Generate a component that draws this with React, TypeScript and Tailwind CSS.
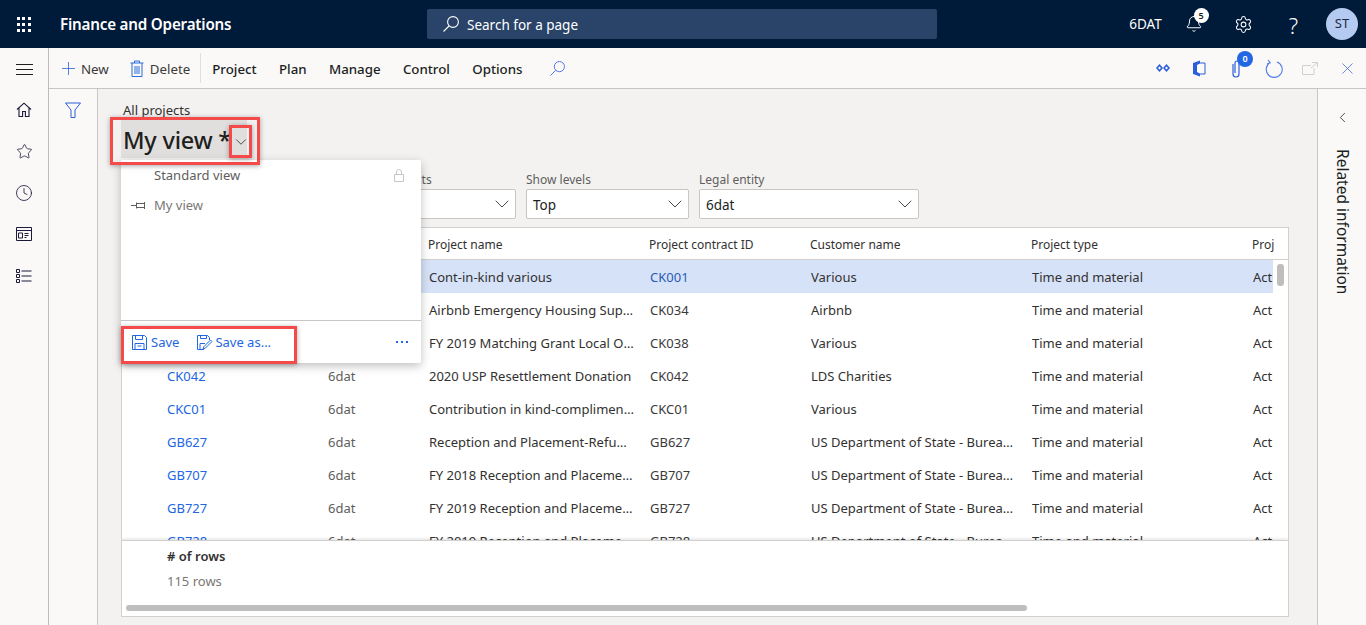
import React from "react";
import { Bell, ChevronDown, ChevronLeft, Clock, Plus, Settings, Star, X } from "lucide-react";

const rows = [
  ["CK001", "6dat", "Cont-in-kind various", "CK001", "Various"],
  ["CK034", "6dat", "Airbnb Emergency Housing Support", "CK034", "Airbnb"],
  ["CK038", "6dat", "FY 2019 Matching Grant Local Office", "CK038", "Various"],
  ["CK042", "6dat", "2020 USP Resettlement Donation", "CK042", "LDS Charities"],
  ["CKC01", "6dat", "Contribution in kind-complimentary", "CKC01", "Various"],
  ["GB627", "6dat", "Reception and Placement-Refugee Program", "GB627", "US Department of State - Bureau of"],
  ["GB707", "6dat", "FY 2018 Reception and Placement Program", "GB707", "US Department of State - Bureau of"],
  ["GB727", "6dat", "FY 2019 Reception and Placement Program", "GB727", "US Department of State - Bureau of"],
  ["GB728", "6dat", "FY 2019 Reception and Placement Program", "GB728", "US Department of State - Bureau of"],
];

const cols = "grid grid-cols-[45px_161px_101px_221px_161px_221px_221px_1fr]";

function Cell({ children, className = "" }: { children?: React.ReactNode; className?: string }) {
  return <div className={`truncate pr-4 pt-[2px] ${className}`}>{children}</div>;
}

function Filter({ label, value, width }: { label: string; value: string; width: string }) {
  return (
    <div className={width}>
      <div className="h-[20px] pt-px text-[12px] leading-[20px] text-[#605e5c]">{label}</div>
      <div className="flex h-[30px] items-center justify-between rounded-[2px] border border-[#c8c6c4] bg-white pl-[6px] pr-px text-[13.5px] text-[#201f1e]">
        <span className="pt-[3px]">{value}</span>
        <ChevronDown size={24} strokeWidth={0.9} className="text-[#323130]" />
      </div>
    </div>
  );
}

function RailIcon({ children }: { children: React.ReactNode }) {
  return <div className="flex h-[41.5px] w-full items-center justify-center text-[#1b1a3a]">{children}</div>;
}

export default function App() {
  return (
    <div className="relative flex h-screen flex-col overflow-hidden bg-[#f3f2f1] text-[13px] text-[#323130] [font-family:'Noto_Sans','Open_Sans',sans-serif]">
      {/* top bar */}
      <header className="flex h-[48px] shrink-0 items-center bg-[#001a3a] text-white">
        <div className="grid w-[48px] grid-cols-3 justify-items-center gap-y-[3px] px-[16px]">
          {Array.from({ length: 9 }).map((_, i) => (
            <span key={i} className="h-[3px] w-[3px] bg-white" />
          ))}
        </div>
        <div className="ml-[12px] w-[367px] text-[15.2px] font-semibold tracking-[-0.2px]">Finance and Operations</div>
        <div className="flex h-[30px] w-[510px] items-center rounded-[2px] bg-[#2a4368] pl-[15px] text-[13.5px]">
          <svg width="18" height="18" viewBox="0 0 18 18" fill="none" stroke="white" strokeWidth="1.1">
            <circle cx="11" cy="7" r="5.4" />
            <path d="M7 11L1.5 16.5" />
          </svg>
          <span className="ml-[7px] pt-[3px]">Search for a page</span>
        </div>
        <div className="ml-auto flex items-center">
          <span className="mr-[23px] text-[13.5px]">6DAT</span>
          <div className="relative mr-[31px]">
            <Bell size={18} strokeWidth={1.3} />
            <span className="absolute -right-[6px] -top-[7px] flex h-[15px] w-[15px] items-center justify-center rounded-full bg-white text-[9px] font-semibold text-[#201f1e]">5</span>
          </div>
          <Settings size={19} strokeWidth={1.3} className="mr-[36px]" />
          <span className="mr-[28px] pt-px text-[22px] font-light leading-none">?</span>
          <div className="mr-[8px] flex h-[32px] w-[32px] items-center justify-center rounded-full bg-[#b4caf0] text-[13px] text-[#1c2a44]">ST</div>
        </div>
      </header>

      {/* action bar */}
      <div className="flex h-[41px] shrink-0 items-center">
        <div className="flex h-full w-[49px] shrink-0 flex-col items-center justify-center gap-[4px] border-r border-[#bdbbb9] bg-[#faf9f8] pt-[2px]">
          <span className="h-px w-[17px] bg-[#201f1e]" />
          <span className="h-px w-[17px] bg-[#201f1e]" />
          <span className="h-px w-[17px] bg-[#201f1e]" />
        </div>
        <div className="flex h-full min-w-0 flex-1 items-center border-b border-[#c8c6c4] bg-[#faf9f8] text-[13.3px] text-[#3b3a39]">
          <Plus size={21} strokeWidth={0.9} className="ml-[9px] text-[#2b5fd9]" />
          <span className="ml-[2px] pt-[3px]">New</span>
          <svg width="14" height="17" viewBox="0 0 14 17" fill="none" stroke="#2b6cd9" strokeWidth="1" className="ml-[21px]">
            <path d="M.5 3h13M4.5 3V1h5v2M2 3v13.5h10V3M5 6v8M7 6v8M9 6v8" />
          </svg>
          <span className="ml-[6px] pt-[3px]">Delete</span>
          <span className="ml-[10px] h-[30px] w-px bg-[#e1dfdd]" />
          <div className="ml-[11px] flex gap-[22.3px] pt-[3px] font-medium text-[#201f1e]">
            <span>Project</span>
            <span>Plan</span>
            <span>Manage</span>
            <span>Control</span>
            <span>Options</span>
          </div>
          <svg width="17" height="17" viewBox="0 0 18 18" fill="none" stroke="#4f6bed" strokeWidth="1" className="ml-[26px]">
            <circle cx="11" cy="7" r="5.4" />
            <path d="M7 11L1.5 16.5" />
          </svg>
          <div className="ml-auto flex items-center">
            <svg width="14" height="10" viewBox="0 0 14 10" fill="#2b5fd9" className="mr-[22px]">
              <path d="M3.5 1L7 5L3.5 9L0 5zM10.5 1L14 5L10.5 9L7 5z" />
              <path d="M3.5 3.5L5 5L3.5 6.5L2 5zM10.5 3.5L12 5L10.5 6.5L9 5z" fill="white" />
            </svg>
            <svg width="14" height="17" viewBox="0 0 14 17" className="mr-[25px]">
              <path d="M8 0.5L1 3v11l7 2.5z" fill="#2b5fd9" />
              <path d="M8 3h5v11H8" fill="none" stroke="#2b5fd9" />
              <path d="M8 3.5L5 5v7l3 1.5z" fill="white" />
            </svg>
            <div className="relative mr-[24px] mt-[2px]">
              <svg width="10" height="18" viewBox="0 0 10 18" fill="none" stroke="#2b5fd9" strokeWidth="1.2">
                <path d="M2 4v10a3 3 0 0 0 6 0V3a2 2 0 0 0-4 0v10" />
              </svg>
              <span className="absolute -right-[12px] -top-[9px] flex h-[16px] w-[16px] items-center justify-center rounded-full bg-[#2266e3] text-[9px] font-semibold text-white">0</span>
            </div>
            <svg width="18" height="19" viewBox="0 0 18 19" fill="none" stroke="#4f7be8" strokeWidth="1.1" className="mr-[19px]">
              <path d="M5 3.6a8 8 0 1 0 7-.7M3 1l2.2 2.8L2 5" />
            </svg>
            <svg width="16" height="13" viewBox="0 0 16 13" fill="none" stroke="#d2d0ce" strokeWidth="1" className="mr-[20px]">
              <path d="M12 6v6.5H.5v-9H9M10 .5h5.5V5M15.5.5L9 6" />
            </svg>
            <X size={19} strokeWidth={0.9} className="mr-[9px] text-[#2b5fd9]" />
          </div>
        </div>
      </div>

      <div className="flex min-h-0 flex-1">
        {/* nav rail */}
        <nav className="flex w-[49px] shrink-0 flex-col border-r border-[#bdbbb9] bg-[#faf9f8]">
          <RailIcon>
            <svg width="16" height="16" viewBox="0 0 16 16" fill="none" stroke="currentColor" strokeWidth="1.1">
              <path d="M1 7.5L8 1.2L15 7.5M3 6v8.5h3.6V9.5h2.8v5H13V6" />
            </svg>
          </RailIcon>
          <RailIcon><Star size={17} strokeWidth={1.1} /></RailIcon>
          <RailIcon><Clock size={18} strokeWidth={1.1} /></RailIcon>
          <RailIcon>
            <svg width="16" height="14" viewBox="0 0 16 14" fill="none" stroke="currentColor" strokeWidth="1">
              <path d="M.5.5h15v13H.5zM.5 3.5h15M2.5 6h4v5h-4zM8.5 6.5h4M8.5 8.5h4M8.5 10.5h2" />
            </svg>
          </RailIcon>
          <RailIcon>
            <svg width="16" height="14" viewBox="0 0 16 14" fill="none" stroke="currentColor" strokeWidth="1">
              <path d="M.5.5h3v3h-3zM.5 5.5h3v3h-3zM.5 10.5h3v3h-3zM5.5 2h10M5.5 7h10M5.5 12h10" />
            </svg>
          </RailIcon>
        </nav>

        {/* filter rail */}
        <div className="flex w-[49px] shrink-0 justify-center border-r border-[#c8c6c4] bg-[#faf9f8] pt-[13px]">
          <svg width="16" height="16" viewBox="0 0 16 16" fill="none" stroke="#2b5fd9" strokeWidth="1">
            <path d="M.5 1h15L10 8v7.5H6V8z" />
          </svg>
        </div>

        {/* content */}
        <main className="flex min-w-0 flex-1 flex-col pb-[8px] pl-[23px] pr-[28px]">
          <div className="ml-[2px] mt-[12px] h-[19px] text-[13px] leading-[18px] text-[#323130]">All projects</div>
          <div className="flex h-[38px] w-[126px] items-center whitespace-nowrap bg-[#e1dfdd] pl-[2px] text-[23.5px] font-medium text-[#201f1e]">
            <span className="pt-[3px] -tracking-[0.2px]">My view *</span>
            <ChevronDown size={18} strokeWidth={1} className="ml-[1px] mt-[5px] shrink-0" />
          </div>
          <div className="ml-[232px] mt-[11px] flex gap-[10px]">
            <Filter label="Show projects" value="All" width="w-[163px]" />
            <Filter label="Show levels" value="Top" width="w-[163px]" />
            <Filter label="Legal entity" value="6dat" width="w-[220px]" />
          </div>

          {/* grid */}
          <section className="relative mt-[8px] flex min-h-0 flex-1 flex-col overflow-hidden border border-[#d2d0ce] bg-white">
            <div className={`${cols} h-[32px] shrink-0 items-center whitespace-nowrap border-b border-[#d2d0ce] text-[12px] text-[#323130]`}>
              <span />
              <Cell>Project ID</Cell>
              <Cell>Company</Cell>
              <Cell className="-ml-px">Project name</Cell>
              <Cell className="-ml-px">Project contract ID</Cell>
              <Cell className="-ml-px">Customer name</Cell>
              <Cell className="-ml-px">Project type</Cell>
              <div className="-ml-px overflow-hidden pt-[2px]">Proj</div>
            </div>
            <div className="h-[280px] shrink-0 overflow-hidden pr-[15px]">
              {rows.map((r, i) => (
                <div key={r[0]} className={`${cols} h-[33px] items-center ${i === 0 ? "bg-[#d6e2f8]" : ""}`}>
                  <span />
                  <Cell className="text-[#2266e3]">{r[0]}</Cell>
                  <Cell className="text-[#605e5c]">{r[1]}</Cell>
                  <Cell>{r[2]}</Cell>
                  <Cell className={i === 0 ? "text-[#2b5bb5]" : "text-[#3b3a39]"}>{r[3]}</Cell>
                  <Cell className="pr-2">{r[4]}</Cell>
                  <Cell>Time and material</Cell>
                  <div className="overflow-hidden whitespace-nowrap pt-[2px]">Active</div>
                </div>
              ))}
            </div>
            <span className="absolute right-[4px] top-[36px] h-[22px] w-[7px] rounded-[3px] bg-[#bebebe]" />
            <div className="relative z-10 flex-1 border-t border-[#d2d0ce] bg-white pl-[45px] shadow-[0_-1px_3px_rgba(0,0,0,0.12)]">
              <div className="mt-[6px] h-[18px] font-semibold leading-[18px] text-[#323130]">
                # of rows
              </div>
              <div className="mt-[7px] leading-[18px] text-[#797775]">115 rows</div>
              <div className="ml-[-41px] mt-[15px] h-[6px] w-[901px] rounded-[3px] bg-[#bebebe]" />
            </div>
          </section>
        </main>

        {/* related information */}
        <aside className="flex w-[49px] shrink-0 flex-col items-center border-l border-[#c8c6c4] bg-[#faf9f8]">
          <ChevronLeft size={17} strokeWidth={1.2} className="mt-[20px] text-[#323130]" />
          <div className="mt-[23px] whitespace-nowrap text-[15.5px] text-[#201f1e] [writing-mode:vertical-rl]">
            Related information
          </div>
        </aside>
      </div>

      {/* view selector flyout */}
      <div className="absolute left-[121px] top-[160px] z-20 flex h-[203px] w-[300px] flex-col rounded-[2px] bg-white shadow-[0_3px_10px_rgba(0,0,0,0.25)]">
        <div className="flex h-[30px] items-center justify-between pl-[33px] pr-[16px] text-[#605e5c]">
          <span className="pt-[2px]">Standard view</span>
          <svg width="12" height="13" viewBox="0 0 12 13" fill="none" stroke="#c8c6c4" strokeWidth="1">
            <path d="M1.5 5.5h9v7h-9zM3.5 5.5V3a2.5 2.5 0 0 1 5 0v2.5" />
          </svg>
        </div>
        <div className="flex h-[30px] items-center pl-[10px] text-[#797775]">
          <svg width="15" height="9" viewBox="0 0 15 9" fill="none" stroke="#605e5c" strokeWidth="1" className="mr-[8px]">
            <path d="M0 4.5h5M5.5 1.5v6M5.5 2.5h8v4h-8M13.5 1v7" />
          </svg>
          <span className="pt-[2px]">My view</span>
        </div>
        <div className="mt-auto flex h-[43px] items-center border-t border-[#c8c6c4] pl-[11px] pr-[13px] text-[#2266e3]">
          <svg width="15" height="15" viewBox="0 0 15 15" fill="none" stroke="currentColor" strokeWidth="1">
            <path d="M.5.5h12l2 2v12H.5zM3.5.5v4h7v-4M3 14.5v-6h9v6M5.5 11h4" />
          </svg>
          <span className="ml-[4px] pt-px">Save</span>
          <svg width="16" height="15" viewBox="0 0 16 15" fill="none" stroke="currentColor" strokeWidth="1" className="ml-[18px]">
            <path d="M7 14.5H.5V.5h10l2 2V5M3.5.5v3h6v-3M3 14V8.5h5M15 6.5l-6.5 6.5-2.5 1 1-2.5L13.5 5z" />
          </svg>
          <span className="ml-[2px] pt-px">Save as...</span>
          <span className="ml-auto flex gap-[3px]">
            <i className="h-[2px] w-[2px] bg-[#2266e3]" />
            <i className="h-[2px] w-[2px] bg-[#2266e3]" />
            <i className="h-[2px] w-[2px] bg-[#2266e3]" />
          </span>
        </div>
      </div>

      {/* red callouts */}
      <div className="pointer-events-none absolute left-[110px] top-[117px] z-30 h-[48px] w-[150px] border-[3px] border-[#f44a4a] shadow-[0_1px_5px_rgba(0,0,0,0.35)]" />
      <div className="pointer-events-none absolute left-[229px] top-[125px] z-30 h-[33px] w-[23px] border-[3px] border-[#f44a4a] shadow-[0_1px_5px_rgba(0,0,0,0.35)]" />
      <div className="pointer-events-none absolute left-[121px] top-[326px] z-30 h-[38px] w-[176px] border-[3px] border-[#f44a4a] shadow-[0_1px_5px_rgba(0,0,0,0.35)]" />
    </div>
  );
}
